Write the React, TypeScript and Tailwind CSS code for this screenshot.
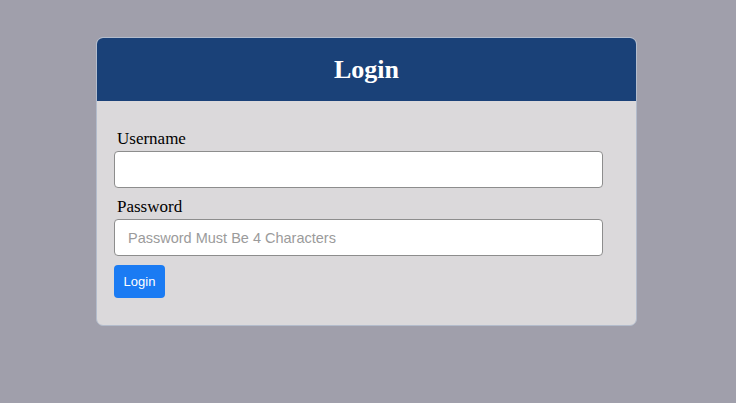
export default function App() {
  return (
    <div className="min-h-[403px] w-full bg-[#a09fab] pt-[37px]">
      <div className="ml-[96px] w-[541px] overflow-hidden rounded-[7px] border border-[#b3bccc] bg-[#dbd9db]">
        <div className="flex h-[63px] items-center justify-center bg-[#1a4178]">
          <h1 className="font-['Liberation_Serif',serif] text-[26px] font-bold text-white">
            Login
          </h1>
        </div>
        <form className="pb-[27px] pl-[17px] pr-[33px] pt-[26px]">
          <label className="block h-[24px] pl-[3px] font-['Liberation_Serif',serif] text-[17px] leading-[24px] text-black">
            Username
          </label>
          <input
            type="text"
            className="block h-[37px] w-[489px] rounded-[4px] border border-[#8d8d8d] bg-white px-[13px] font-['Liberation_Sans',sans-serif] text-[14.5px] outline-none"
          />
          <label className="mt-[7px] block h-[24px] pl-[3px] font-['Liberation_Serif',serif] text-[17px] leading-[24px] text-black">
            Password
          </label>
          <input
            type="password"
            placeholder="Password Must Be 4 Characters"
            className="block h-[37px] w-[489px] rounded-[4px] border border-[#8d8d8d] bg-white px-[13px] font-['Liberation_Sans',sans-serif] text-[14.5px] outline-none placeholder:text-[#9b9b9b]"
          />
          <button
            type="button"
            className="mt-[9px] h-[33px] w-[51px] rounded-[4px] bg-[#1a7bf3] font-['Liberation_Sans',sans-serif] text-[13px] text-white"
          >
            Login
          </button>
        </form>
      </div>
    </div>
  );
}
